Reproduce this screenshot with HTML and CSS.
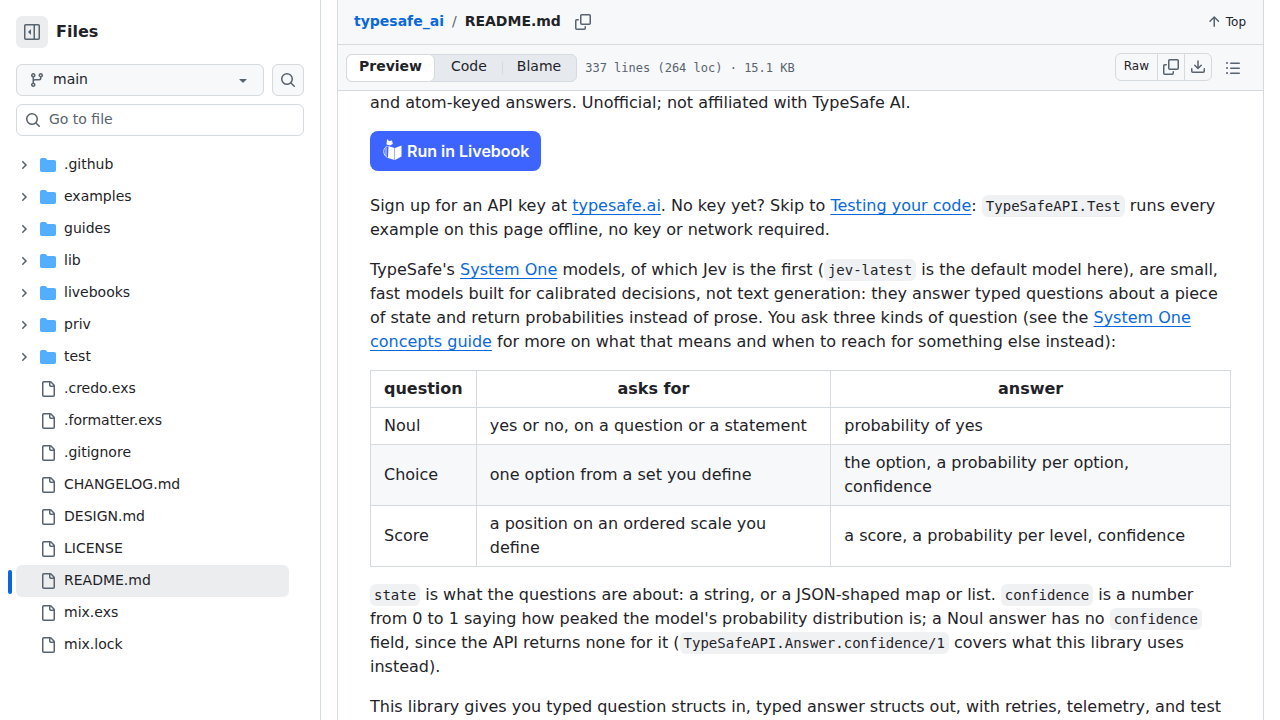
FILE: index.html
```html
<!DOCTYPE html>
<html lang="en">
<head>
    <meta charset="UTF-8">
    <meta name="viewport" content="width=device-width, initial-scale=1.0">
    <title>typesafe_ai/README.md</title>
    <link rel="stylesheet" href="styles.css">
</head>
<body>
    <svg class="sprite" aria-hidden="true">
        <symbol id="i-sidebar" viewBox="0 0 16 16"><path d="m4.177 7.823 2.396-2.396A.25.25 0 0 1 7 5.604v4.792a.25.25 0 0 1-.427.177L4.177 8.177a.25.25 0 0 1 0-.354Z"/><path d="M1.75 0h12.5C15.216 0 16 .784 16 1.75v12.5A1.75 1.75 0 0 1 14.25 16H1.75A1.75 1.75 0 0 1 0 14.25V1.75C0 .784.784 0 1.75 0ZM1.5 1.75v12.5c0 .138.112.25.25.25H9.5v-13H1.75a.25.25 0 0 0-.25.25ZM11 14.5h3.25a.25.25 0 0 0 .25-.25V1.75a.25.25 0 0 0-.25-.25H11Z"/></symbol>
        <symbol id="i-branch" viewBox="0 0 16 16"><path d="M9.5 3.25a2.25 2.25 0 1 1 3 2.122V6A2.5 2.5 0 0 1 10 8.5H6a1 1 0 0 0-1 1v1.128a2.251 2.251 0 1 1-1.5 0V5.372a2.25 2.25 0 1 1 1.5 0v1.836A2.493 2.493 0 0 1 6 7h4a1 1 0 0 0 1-1v-.628A2.25 2.25 0 0 1 9.5 3.25Zm-6 0a.75.75 0 1 0 1.5 0 .75.75 0 0 0-1.5 0Zm8.25-.75a.75.75 0 1 0 0 1.5.75.75 0 0 0 0-1.5ZM4.25 12a.75.75 0 1 0 0 1.5.75.75 0 0 0 0-1.5Z"/></symbol>
        <symbol id="i-search" viewBox="0 0 16 16"><path d="M10.68 11.74a6 6 0 0 1-7.922-8.982 6 6 0 0 1 8.982 7.922l3.04 3.04a.749.749 0 0 1-.326 1.275.749.749 0 0 1-.734-.215ZM11.5 7a4.499 4.499 0 1 0-8.997 0A4.499 4.499 0 0 0 11.5 7Z"/></symbol>
        <symbol id="i-caret" viewBox="0 0 16 16"><path d="m4.427 7.427 3.396 3.396a.25.25 0 0 0 .354 0l3.396-3.396A.25.25 0 0 0 11.396 7H4.604a.25.25 0 0 0-.177.427Z"/></symbol>
        <symbol id="i-chevron" viewBox="0 0 12 12"><path d="M4.7 10c-.2 0-.4-.1-.5-.2-.3-.3-.3-.8 0-1.1L6.9 6 4.2 3.3c-.3-.3-.3-.8 0-1.1.3-.3.8-.3 1.1 0l3.3 3.2c.3.3.3.8 0 1.1L5.3 9.700c-.2.2-.4.3-.6.3Z"/></symbol>
        <symbol id="i-folder" viewBox="0 0 16 16"><path d="M1.75 1A1.75 1.75 0 0 0 0 2.75v10.5C0 14.216.784 15 1.75 15h12.5A1.75 1.75 0 0 0 16 13.25v-8.5A1.75 1.75 0 0 0 14.25 3H7.5a.25.25 0 0 1-.2-.1l-.9-1.2C6.07 1.26 5.55 1 5 1H1.75Z"/></symbol>
        <symbol id="i-file" viewBox="0 0 16 16"><path d="M2 1.75C2 .784 2.784 0 3.75 0h6.586c.464 0 .909.184 1.237.513l2.914 2.914c.329.328.513.773.513 1.237v9.586A1.75 1.75 0 0 1 13.25 16h-9.5A1.75 1.75 0 0 1 2 14.25Zm1.75-.25a.25.25 0 0 0-.25.25v12.5c0 .138.112.25.25.25h9.5a.25.25 0 0 0 .25-.25V6h-2.75A1.75 1.75 0 0 1 9 4.25V1.5Zm6.75.062V4.25c0 .138.112.25.25.25h2.688l-.011-.013-2.914-2.914-.013-.011Z"/></symbol>
        <symbol id="i-copy" viewBox="0 0 16 16"><path d="M0 6.75C0 5.784.784 5 1.75 5h1.5a.75.75 0 0 1 0 1.5h-1.5a.25.25 0 0 0-.25.25v7.5c0 .138.112.25.25.25h7.5a.25.25 0 0 0 .25-.25v-1.5a.75.75 0 0 1 1.5 0v1.5A1.75 1.75 0 0 1 9.25 16h-7.5A1.75 1.75 0 0 1 0 14.25Z"/><path d="M5 1.75C5 .784 5.784 0 6.75 0h7.5C15.216 0 16 .784 16 1.75v7.5A1.75 1.75 0 0 1 14.25 11h-7.5A1.75 1.75 0 0 1 5 9.25Zm1.75-.25a.25.25 0 0 0-.25.25v7.5c0 .138.112.25.25.25h7.5a.25.25 0 0 0 .25-.25v-7.5a.25.25 0 0 0-.25-.25Z"/></symbol>
        <symbol id="i-download" viewBox="0 0 16 16"><path d="M2.75 14A1.75 1.75 0 0 1 1 12.25v-2.5a.75.75 0 0 1 1.5 0v2.5c0 .138.112.25.25.25h10.5a.25.25 0 0 0 .25-.25v-2.5a.75.75 0 0 1 1.5 0v2.5A1.75 1.75 0 0 1 13.25 14Z"/><path d="M7.25 7.689V2a.75.75 0 0 1 1.5 0v5.689l1.97-1.969a.749.749 0 1 1 1.06 1.06l-3.25 3.25a.749.749 0 0 1-1.06 0L4.22 6.78a.749.749 0 1 1 1.06-1.06l1.97 1.969Z"/></symbol>
        <symbol id="i-list" viewBox="0 0 16 16"><path d="M5.75 2.5h8.5a.75.75 0 0 1 0 1.5h-8.5a.75.75 0 0 1 0-1.5Zm0 5h8.5a.75.75 0 0 1 0 1.5h-8.5a.75.75 0 0 1 0-1.5Zm0 5h8.5a.75.75 0 0 1 0 1.5h-8.5a.75.75 0 0 1 0-1.5ZM2 14a1 1 0 1 1 0-2 1 1 0 0 1 0 2Zm1-6a1 1 0 1 1-2 0 1 1 0 0 1 2 0ZM2 4a1 1 0 1 1 0-2 1 1 0 0 1 0 2Z"/></symbol>
        <symbol id="i-up" viewBox="0 0 16 16"><path d="M3.47 7.78a.75.75 0 0 1 0-1.06l4.25-4.25a.75.75 0 0 1 1.06 0l4.25 4.25a.751.751 0 0 1-.018 1.042.751.751 0 0 1-1.042.018L9 4.81v7.44a.75.75 0 0 1-1.5 0V4.81L4.53 7.78a.75.75 0 0 1-1.06 0Z"/></symbol>
    </svg>

    <div class="layout">
        <aside class="sidebar">
            <div class="sidebar-head">
                <button class="icon-button toggle" aria-label="Collapse file tree"><svg class="icon"><use href="#i-sidebar"/></svg></button>
                <h2>Files</h2>
            </div>
            <div class="branch-row">
                <button class="branch">
                    <svg class="icon"><use href="#i-branch"/></svg>
                    <span class="branch-name">main</span>
                    <svg class="icon"><use href="#i-caret"/></svg>
                </button>
                <button class="icon-button" aria-label="Search this repository"><svg class="icon"><use href="#i-search"/></svg></button>
            </div>
            <label class="file-search">
                <svg class="icon"><use href="#i-search"/></svg>
                <input type="text" placeholder="Go to file" aria-label="Go to file">
            </label>
            <ul class="tree">
                <li><a href="#"><svg class="chevron"><use href="#i-chevron"/></svg><svg class="icon folder"><use href="#i-folder"/></svg><span>.github</span></a></li>
                <li><a href="#"><svg class="chevron"><use href="#i-chevron"/></svg><svg class="icon folder"><use href="#i-folder"/></svg><span>examples</span></a></li>
                <li><a href="#"><svg class="chevron"><use href="#i-chevron"/></svg><svg class="icon folder"><use href="#i-folder"/></svg><span>guides</span></a></li>
                <li><a href="#"><svg class="chevron"><use href="#i-chevron"/></svg><svg class="icon folder"><use href="#i-folder"/></svg><span>lib</span></a></li>
                <li><a href="#"><svg class="chevron"><use href="#i-chevron"/></svg><svg class="icon folder"><use href="#i-folder"/></svg><span>livebooks</span></a></li>
                <li><a href="#"><svg class="chevron"><use href="#i-chevron"/></svg><svg class="icon folder"><use href="#i-folder"/></svg><span>priv</span></a></li>
                <li><a href="#"><svg class="chevron"><use href="#i-chevron"/></svg><svg class="icon folder"><use href="#i-folder"/></svg><span>test</span></a></li>
                <li><a class="file" href="#"><svg class="icon"><use href="#i-file"/></svg><span>.credo.exs</span></a></li>
                <li><a class="file" href="#"><svg class="icon"><use href="#i-file"/></svg><span>.formatter.exs</span></a></li>
                <li><a class="file" href="#"><svg class="icon"><use href="#i-file"/></svg><span>.gitignore</span></a></li>
                <li><a class="file" href="#"><svg class="icon"><use href="#i-file"/></svg><span>CHANGELOG.md</span></a></li>
                <li><a class="file" href="#"><svg class="icon"><use href="#i-file"/></svg><span>DESIGN.md</span></a></li>
                <li><a class="file" href="#"><svg class="icon"><use href="#i-file"/></svg><span>LICENSE</span></a></li>
                <li><a class="file current" href="#" aria-current="page"><svg class="icon"><use href="#i-file"/></svg><span>README.md</span></a></li>
                <li><a class="file" href="#"><svg class="icon"><use href="#i-file"/></svg><span>mix.exs</span></a></li>
                <li><a class="file" href="#"><svg class="icon"><use href="#i-file"/></svg><span>mix.lock</span></a></li>
            </ul>
        </aside>

        <main class="content">
            <header class="path-bar">
                <nav class="breadcrumb">
                    <a href="#">typesafe_ai</a>
                    <span class="slash">/</span>
                    <strong>README.md</strong>
                </nav>
                <button class="plain-button copy-path" aria-label="Copy path"><svg class="icon"><use href="#i-copy"/></svg></button>
                <button class="plain-button top-button"><svg class="icon"><use href="#i-up"/></svg><span>Top</span></button>
            </header>

            <div class="toolbar">
                <div class="segmented">
                    <button class="segment selected">Preview</button>
                    <button class="segment">Code</button>
                    <button class="segment divided">Blame</button>
                </div>
                <span class="file-info">337 lines (264 loc) · 15.1 KB</span>
                <div class="button-group">
                    <button class="raw">Raw</button>
                    <button aria-label="Copy raw file"><svg class="icon"><use href="#i-copy"/></svg></button>
                    <button aria-label="Download raw file"><svg class="icon"><use href="#i-download"/></svg></button>
                </div>
                <button class="plain-button outline" aria-label="Outline"><svg class="icon"><use href="#i-list"/></svg></button>
            </div>

            <article class="markdown">
                <p>and atom-keyed answers. Unofficial; not affiliated with TypeSafe AI.</p>
                <p class="badges"><a class="livebook" href="#"><svg class="livebook-logo" viewBox="0 -1 20 24"><path d="M5-1 7 1l3-.500.800 3.500L8 5.500 4.500 4.500Z"/><path d="M6.500 6 12.500 8v12L6 18Z"/><path d="M13 8l6.500-2.500v11L13 20Z"/><path d="M5.500 6.500C.5 7 .5 15.500 5.500 17.500M4 8v8" fill="none" stroke="#fff" stroke-width=".8"/></svg>Run in Livebook</a></p>
                <p>Sign up for an API key at <a href="#">typesafe.ai</a>. No key yet? Skip to <a href="#">Testing your code</a>: <code>TypeSafeAPI.Test</code> runs every example on this page offline, no key or network required.</p>
                <p>TypeSafe's <a href="#">System One</a> models, of which Jev is the first (<code>jev-latest</code> is the default model here), are small, fast models built for calibrated decisions, not text generation: they answer typed questions about a piece of state and return probabilities instead of prose. You ask three kinds of question (see the <a href="#">System One concepts guide</a> for more on what that means and when to reach for something else instead):</p>
                <table>
                    <thead>
                        <tr><th>question</th><th>asks for</th><th>answer</th></tr>
                    </thead>
                    <tbody>
                        <tr><td>Noul</td><td>yes or no, on a question or a statement</td><td>probability of yes</td></tr>
                        <tr><td>Choice</td><td>one option from a set you define</td><td>the option, a probability per option, confidence</td></tr>
                        <tr><td>Score</td><td>a position on an ordered scale you define</td><td>a score, a probability per level, confidence</td></tr>
                    </tbody>
                </table>
                <p><code>state</code> is what the questions are about: a string, or a JSON-shaped map or list. <code>confidence</code> is a number from 0 to 1 saying how peaked the model's probability distribution is; a Noul answer has no <code>confidence</code> field, since the API returns none for it (<code>TypeSafeAPI.Answer.confidence/1</code> covers what this library uses instead).</p>
                <p>This library gives you typed question structs in, typed answer structs out, with retries, telemetry, and test</p>
            </article>
        </main>
    </div>
</body>
</html>
```
FILE: styles.css
```css
* {
    box-sizing: border-box;
}

body {
    margin: 0;
    font-family: "DejaVu Sans", sans-serif;
    font-size: 14px;
    color: #1f2328;
    background: #fff;
}

button,
input {
    font: inherit;
    color: inherit;
    margin: 0;
}

button {
    cursor: pointer;
    padding: 0;
}

a {
    color: #0969da;
}

.sprite {
    display: none;
}

.icon {
    width: 16px;
    height: 16px;
    flex: none;
    fill: #59636e;
}

.layout {
    display: flex;
    height: 100vh;
    overflow: hidden;
}

/* Sidebar */
.sidebar {
    width: 321px;
    flex: none;
    padding: 16px 16px 0;
    border-right: 1px solid #d4dade;
}

.sidebar-head {
    display: flex;
    align-items: center;
    gap: 8px;
    margin-bottom: 16px;
}

.sidebar-head h2 {
    margin: 0;
    font-size: 16px;
    line-height: 24px;
}

.icon-button {
    display: flex;
    align-items: center;
    justify-content: center;
    width: 32px;
    height: 32px;
    border: 1px solid #d4dade;
    border-radius: 6px;
    background: #f6f8fa;
}

.icon-button.toggle {
    border: none;
    background: #ebedef;
}

.branch-row {
    display: flex;
    gap: 8px;
    margin-bottom: 8px;
}

.branch {
    display: flex;
    align-items: center;
    gap: 8px;
    flex: 1;
    height: 32px;
    padding: 0 12px;
    border: 1px solid #d4dade;
    border-radius: 6px;
    background: #f6f8fa;
}

.branch-name {
    flex: 1;
    padding-bottom: 2px;
    text-align: left;
}

.file-search {
    display: flex;
    align-items: center;
    gap: 8px;
    height: 32px;
    padding: 0 8px;
    border: 1px solid #d4dade;
    border-radius: 6px;
}

.file-search input {
    flex: 1;
    min-width: 0;
    padding: 0 0 2px;
    border: none;
    outline: none;
    background: none;
}

.file-search input::placeholder {
    color: #59636e;
    opacity: 1;
}

.tree {
    list-style: none;
    margin: 13px 15px 0 0;
    padding: 0;
}

.tree a {
    position: relative;
    display: flex;
    align-items: center;
    gap: 8px;
    height: 32px;
    padding-left: 2px;
    border-radius: 6px;
    color: #1f2328;
    text-decoration: none;
}

.tree span {
    padding-bottom: 2px;
}

.tree a.file {
    padding-left: 24px;
}

.tree a.current {
    background: #ebedef;
}

.tree a.current::before {
    content: "";
    position: absolute;
    left: -8px;
    top: 5px;
    width: 4px;
    height: 24px;
    border-radius: 6px;
    background: #0969da;
}

.chevron {
    width: 12px;
    height: 12px;
    margin-right: 2px;
    fill: #59636e;
}

.folder {
    fill: #54aeff;
}

/* File view */
.content {
    flex: 1;
    min-width: 0;
    margin: 0 16px;
    border: solid #d4dade;
    border-width: 0 1px;
}

.path-bar {
    display: flex;
    align-items: center;
    height: 45px;
    padding: 0 16px;
    border-bottom: 1px solid #d4dade;
    background: #f6f8fa;
}

.breadcrumb {
    display: flex;
    gap: 8px;
    padding-bottom: 2px;
}

.breadcrumb a {
    font-weight: bold;
    text-decoration: none;
}

.slash {
    color: #59636e;
}

.plain-button {
    display: flex;
    align-items: center;
    border: none;
    background: none;
}

.copy-path {
    margin-left: 14px;
}

.top-button {
    gap: 4px;
    margin: 0 1px 0 auto;
    font-size: 12px;
}

.top-button span {
    padding-bottom: 1px;
}

.toolbar {
    display: flex;
    align-items: center;
    height: 46px;
    padding: 0 8px;
    border-bottom: 1px solid #d4dade;
    background: #f6f8fa;
}

.segmented {
    display: flex;
    height: 28px;
    border: 1px solid #d4dade;
    border-radius: 6px;
    background: #e6eaef;
}

.segment {
    padding: 0 15px 3px 16px;
    border: none;
    background: none;
}

.segment.selected {
    margin: -1px 0 -1px -1px;
    padding: 0 12px 3px;
    border: 1px solid #d4dade;
    border-radius: 6px;
    background: #fff;
    font-weight: bold;
}

.segment.divided {
    padding: 0 15px 3px;
    background: linear-gradient(#d4dade, #d4dade) left center / 1px 12px no-repeat;
}

.file-info {
    margin-left: 8px;
    font-family: "DejaVu Sans Mono", monospace;
    font-size: 12px;
    color: #59636e;
}

.button-group {
    display: flex;
    height: 28px;
    margin: 0 0 1px auto;
    border: 1px solid #d4dade;
    border-radius: 6px;
}

.button-group button {
    display: flex;
    align-items: center;
    padding: 0 5px;
    border: none;
    background: none;
    font-size: 12px;
}

.button-group button + button {
    border-left: 1px solid #d4dade;
}

.button-group .raw {
    padding: 0 8px 2px;
}

.outline {
    margin: 0 14px 0 13px;
}

/* Rendered markdown */
.markdown {
    padding: 0 32px;
    font-size: 16px;
    line-height: 24px;
}

.markdown p {
    margin: 0 0 16px;
}

.markdown .badges {
    padding-bottom: 7px;
}

.markdown code {
    padding: 3px 4px;
    border-radius: 6px;
    background: #eff1f3;
    font-family: "DejaVu Sans Mono", monospace;
    font-size: 14px;
}

.markdown p a {
    text-underline-offset: 3px;
}

.markdown .livebook {
    display: inline-flex;
    align-items: center;
    gap: 5px;
    height: 40px;
    padding: 0 12px;
    border-radius: 8px;
    background: #3e64ff;
    color: #fff;
    font-family: Inter, sans-serif;
    font-weight: 600;
    text-decoration: none;
}

.livebook-logo {
    width: 20px;
    height: 24px;
    fill: #fff;
}

.markdown table {
    width: 100%;
    margin-bottom: 16px;
    border-collapse: collapse;
}

.markdown th,
.markdown td {
    padding: 6px 13px;
    border: 1px solid #d4dade;
    text-align: left;
}

.markdown th {
    text-align: center;
}

.markdown tbody tr:nth-child(even) {
    background: #f6f8fa;
}
```
